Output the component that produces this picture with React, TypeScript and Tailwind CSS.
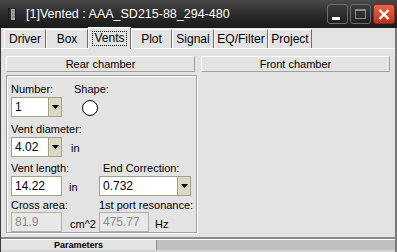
import React from "react";

const Combo = ({ value, w }: { value: string; w: string }) => (
  <div className={`flex h-[20px] ${w} border border-[#a69f8a] bg-white`}>
    <div className="flex-1 pl-[3px] text-[12px] leading-[18px] text-black">{value}</div>
    <div className="flex w-[13px] items-center justify-center border-l border-[#a69f8a] bg-[#dcd8c6]">
      <svg width="7" height="4" viewBox="0 0 7 4">
        <polygon points="0,0 7,0 3.5,4" fill="#000" />
      </svg>
    </div>
  </div>
);

const Input = ({ value, w, disabled }: { value: string; w: string; disabled?: boolean }) => (
  <div
    className={`h-[20px] ${w} border pl-[3px] text-[12px] leading-[18px] ${
      disabled ? "border-[#b4b0a4] bg-[#e8e8e8] text-[#8c8c8c]" : "border-[#a69f8a] bg-white text-black"
    }`}
  >
    {value}
  </div>
);

const Tab = ({ label, w, selected }: { label: string; w: string; selected?: boolean }) => (
  <div
    className={`${w} flex shrink-0 items-center justify-center border-l border-t border-white border-r border-r-[#6e6e6e] text-[12px] text-black ${
      selected ? "h-[22px] relative z-10 -mb-[1px] bg-[#e3e3e3]" : "h-[19px] bg-[#e3e3e3]"
    }`}
  >
    <span className={selected ? "border border-dotted border-black px-[1px] leading-[13px]" : "leading-[13px]"}>{label}</span>
  </div>
);

export default function App() {
  return (
    <div
      className="flex h-[252px] w-[397px] flex-col overflow-hidden bg-[#e3e3e3] text-[11px] text-black"
      style={{ fontFamily: "'Liberation Sans', Arial, sans-serif" }}
    >
      {/* Title bar */}
      <div className="flex h-[28px] shrink-0 items-center bg-gradient-to-b from-[#4a4a4a] via-[#2c2c2c] to-[#1a1a1a]">
        <div className="ml-[8px] mr-[10px]">
          <svg width="8" height="13" viewBox="0 0 8 13">
            <rect x="0.5" y="0.5" width="7" height="12" fill="#a8a8a8" stroke="#1a1a1a" />
            <rect x="1" y="1" width="2" height="11" fill="#2a2a2a" />
            <line x1="4" y1="3" x2="7" y2="3" stroke="#666" />
            <line x1="4" y1="6" x2="7" y2="6" stroke="#666" />
            <line x1="4" y1="9" x2="7" y2="9" stroke="#666" />
          </svg>
        </div>
        <div className="flex-1 text-[12.5px] leading-[14px] text-white">[1]Vented : AAA_SD215-88_294-480</div>
        <div className="mr-[2px] flex gap-[2px]">
          <div className="relative h-[20px] w-[21px] rounded-[3px] border border-[#6c6c6c] bg-gradient-to-b from-[#3e3e3e] to-[#202020]">
            <div className="absolute left-[4px] top-[12px] h-[3px] w-[8px] bg-white" />
          </div>
          <div className="flex h-[20px] w-[21px] items-center justify-center rounded-[3px] border border-[#6c6c6c] bg-gradient-to-b from-[#3e3e3e] to-[#202020]">
            <div className="h-[10px] w-[11px] border border-t-[2px] border-[#8c8c8c]" />
          </div>
          <div className="flex h-[20px] w-[22px] items-center justify-center rounded-[3px] border border-[#8a2a1a] bg-gradient-to-b from-[#e8674a] to-[#c0321c]">
            <svg width="12" height="11" viewBox="0 0 12 11">
              <path d="M1.5 1 L10.5 10 M10.5 1 L1.5 10" stroke="#fff" strokeWidth="2.4" />
            </svg>
          </div>
        </div>
      </div>

      {/* Body */}
      <div className="flex flex-1 flex-col border-l border-l-[#3a3a3a] border-r-[2px] border-r-[#7a7a7a]">
        {/* Tabs */}
        <div className="flex h-[20px] shrink-0 items-end pl-[3px]">
          <Tab label="Driver" w="w-[42px]" />
          <Tab label="Box" w="w-[42px]" />
          <Tab label="Vents" w="w-[43px]" selected />
          <Tab label="Plot" w="w-[41px]" />
          <Tab label="Signal" w="w-[42px]" />
          <Tab label="EQ/Filter" w="w-[54px]" />
          <Tab label="Project" w="w-[44px]" />
        </div>

        {/* Panel */}
        <div className="flex h-[189px] shrink-0 flex-col border-t border-white pl-[5px] pt-[7px]">
          <div className="flex gap-[6px]">
            <div className="flex h-[16px] w-[189px] items-center justify-center border border-white border-b-[#a0a0a0] border-r-[#a0a0a0] text-[11px] leading-[12px]">
              Rear chamber
            </div>
            <div className="flex h-[16px] w-[189px] items-center justify-center border border-white border-b-[#a0a0a0] border-r-[#a0a0a0] text-[11px] leading-[12px]">
              Front chamber
            </div>
          </div>

          {/* Group box */}
          <div className="mt-[3px] h-[158px] w-[191px] border border-[#a0a0a0] pl-[4px] pt-[7px] shadow-[inset_1px_1px_0_#fff,1px_1px_0_#fff]">
            {/* Row A */}
            <div className="flex">
              <div className="w-[63px]">
                <div className="h-[13px] leading-[13px]">Number:</div>
                <div className="mt-[1px]">
                  <Combo value="1" w="w-[51px]" />
                </div>
              </div>
              <div>
                <div className="h-[13px] leading-[13px]">Shape:</div>
                <div className="ml-[8px] mt-[4px] h-[16px] w-[16px] rounded-full border border-black bg-white" />
              </div>
            </div>

            {/* Row B */}
            <div className="mt-[6px] h-[13px] leading-[13px]">Vent diameter:</div>
            <div className="mt-[1px] flex items-end">
              <Combo value="4.02" w="w-[51px]" />
              <div className="mb-[2px] ml-[9px] leading-[13px]">in</div>
            </div>

            {/* Row C */}
            <div className="mt-[5px] flex">
              <div className="w-[88px]">
                <div className="h-[13px] leading-[13px]">Vent length:</div>
                <div className="mt-[1px] flex items-end">
                  <Input value="14.22" w="w-[51px]" />
                  <div className="mb-[2px] ml-[7px] leading-[13px]">in</div>
                </div>
              </div>
              <div>
                <div className="h-[13px] pl-[4px] leading-[13px]">End Correction:</div>
                <div className="mt-[1px]">
                  <Combo value="0.732" w="w-[92px]" />
                </div>
              </div>
            </div>

            {/* Row D */}
            <div className="mt-[3px] flex">
              <div className="w-[88px]">
                <div className="h-[13px] leading-[13px]">Cross area:</div>
                <div className="flex items-end">
                  <Input value="81.9" w="w-[51px]" disabled />
                  <div className="mb-[1px] ml-[8px] leading-[13px]">cm^2</div>
                </div>
              </div>
              <div>
                <div className="h-[13px] leading-[13px]">1st port resonance:</div>
                <div className="flex items-end">
                  <Input value="475.77" w="w-[50px]" disabled />
                  <div className="mb-[1px] ml-[6px] leading-[13px]">Hz</div>
                </div>
              </div>
            </div>
          </div>
        </div>

        {/* Bottom bar */}
        <div className="flex h-[15px] shrink-0 flex-col border-t-[2px] border-t-[#8a8a8a]">
          <div className="h-[1px] bg-white" />
          <div className="flex h-[10px]">
            <div className="flex w-[156px] items-center justify-center border-r border-r-[#8a8a8a] bg-[#e3e3e3] text-[9px] font-bold leading-[10px]">
              Parameters
            </div>
            <div className="flex-1 bg-[#c0c0c0]" />
          </div>
          <div className="h-[2px] bg-[#d4d4d4]" />
        </div>
      </div>
    </div>
  );
}
